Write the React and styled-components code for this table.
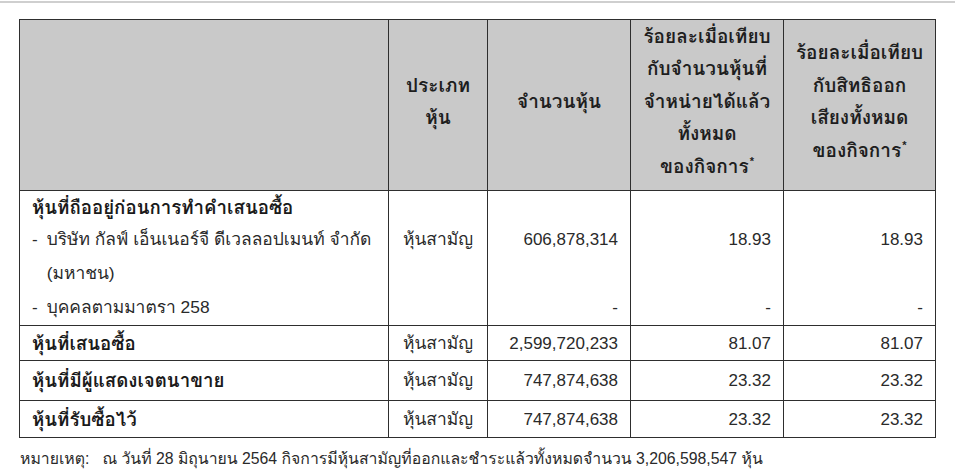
import React from "react";
import styled, { createGlobalStyle } from "styled-components";

const GlobalStyle = createGlobalStyle`
  body {
    margin: 0;
    background: #fff;
    font-family: "Liberation Sans", "Loma", "Garuda", "Noto Sans Thai Looped", "Noto Sans Thai", "Noto Sans", sans-serif;
    color: #2a2a2a;
  }
`;

const Page = styled.div`
  width: 955px;
  height: 475px;
  box-sizing: border-box;
  border-top: 2px solid #cfcfcf;
  margin-top: 1px;
  padding: 16px 0 0 19px;
`;

const Table = styled.table`
  width: 916px;
  border-collapse: collapse;
  table-layout: fixed;
  border: 1px solid #2e2e2e;
`;

const HeadCell = styled.th`
  height: 164px;
  padding: 0 4px 6px;
  background: #c9c9c9;
  border: 1px solid #2e2e2e;
  font-size: 19px;
  font-weight: 700;
  line-height: 32.5px;
  color: #1e1e1e;
  text-align: center;
  vertical-align: middle;
  white-space: nowrap;
`;

const Mark = styled.sup`
  font-size: 11px;
  line-height: 0;
  vertical-align: 8px;
  margin-left: 1px;
`;

const Cell = styled.td`
  height: ${(p) => p.$h || 34}px;
  padding: 0 12px;
  border: 1px solid #2e2e2e;
  font-size: ${(p) => (p.$num ? 17 : 17.4)}px;
  line-height: 33px;
  text-align: ${(p) => p.$align || "left"};
  vertical-align: ${(p) => (p.$top ? "top" : "middle")};
  white-space: nowrap;
`;

const GroupLines = styled.div`
  display: grid;
  grid-template-rows: 32px 34px 34px 33px;
`;

const Label = styled.div`
  font-size: 18.7px;
  font-weight: 700;
  color: #1a1a1a;
`;

const Item = styled.div`
  display: flex;
  gap: 9px;
`;

const Dash = styled.span`
  font-size: 17px;
  visibility: ${(p) => (p.$hidden ? "hidden" : "visible")};
`;

const Footnote = styled.div`
  margin-top: 9px;
  margin-left: 1px;
  font-size: 15.8px;
  line-height: 24px;
  display: flex;
  gap: 13px;
`;

const rows = [
  { label: "หุ้นที่เสนอซื้อ", shares: "2,599,720,233", pctSold: "81.07", pctVote: "81.07", h: 34 },
  { label: "หุ้นที่มีผู้แสดงเจตนาขาย", shares: "747,874,638", pctSold: "23.32", pctVote: "23.32", h: 39 },
  { label: "หุ้นที่รับซื้อไว้", shares: "747,874,638", pctSold: "23.32", pctVote: "23.32", h: 36 },
];

export default function App() {
  return (
    <>
      <GlobalStyle />
      <Page>
        <Table>
          <colgroup>
            <col style={{ width: 369 }} />
            <col style={{ width: 99 }} />
            <col style={{ width: 143 }} />
            <col style={{ width: 153 }} />
            <col style={{ width: 152 }} />
          </colgroup>
          <thead>
            <tr>
              <HeadCell />
              <HeadCell>
                ประเภท
                <br />
                หุ้น
              </HeadCell>
              <HeadCell>จำนวนหุ้น</HeadCell>
              <HeadCell>
                ร้อยละเมื่อเทียบ
                <br />
                กับจำนวนหุ้นที่
                <br />
                จำหน่ายได้แล้ว
                <br />
                ทั้งหมด
                <br />
                ของกิจการ<Mark>*</Mark>
              </HeadCell>
              <HeadCell>
                ร้อยละเมื่อเทียบ
                <br />
                กับสิทธิออก
                <br />
                เสียงทั้งหมด
                <br />
                ของกิจการ<Mark>*</Mark>
              </HeadCell>
            </tr>
          </thead>
          <tbody>
            <tr>
              <Cell $top $h={134}>
                <GroupLines>
                  <Label>หุ้นที่ถืออยู่ก่อนการทำคำเสนอซื้อ</Label>
                  <Item>
                    <Dash>-</Dash>
                    <span>บริษัท กัลฟ์ เอ็นเนอร์จี ดีเวลลอปเมนท์ จำกัด</span>
                  </Item>
                  <Item>
                    <Dash $hidden>-</Dash>
                    <span>(มหาชน)</span>
                  </Item>
                  <Item>
                    <Dash>-</Dash>
                    <span>บุคคลตามมาตรา 258</span>
                  </Item>
                </GroupLines>
              </Cell>
              <Cell $top $align="center">
                <GroupLines>
                  <span />
                  <span>หุ้นสามัญ</span>
                </GroupLines>
              </Cell>
              <Cell $top $num $align="right">
                <GroupLines>
                  <span />
                  <span>606,878,314</span>
                  <span />
                  <span>-</span>
                </GroupLines>
              </Cell>
              <Cell $top $num $align="right">
                <GroupLines>
                  <span />
                  <span>18.93</span>
                  <span />
                  <span>-</span>
                </GroupLines>
              </Cell>
              <Cell $top $num $align="right">
                <GroupLines>
                  <span />
                  <span>18.93</span>
                  <span />
                  <span>-</span>
                </GroupLines>
              </Cell>
            </tr>
            {rows.map((r) => (
              <tr key={r.label}>
                <Cell $h={r.h}>
                  <Label>{r.label}</Label>
                </Cell>
                <Cell $h={r.h} $align="center">
                  หุ้นสามัญ
                </Cell>
                <Cell $h={r.h} $num $align="right">
                  {r.shares}
                </Cell>
                <Cell $h={r.h} $num $align="right">
                  {r.pctSold}
                </Cell>
                <Cell $h={r.h} $num $align="right">
                  {r.pctVote}
                </Cell>
              </tr>
            ))}
          </tbody>
        </Table>
        <Footnote>
          <span>หมายเหตุ:</span>
          <span>
            ณ วันที่ 28 มิถุนายน 2564 กิจการมีหุ้นสามัญที่ออกและชำระแล้วทั้งหมดจำนวน 3,206,598,547 หุ้น
          </span>
        </Footnote>
      </Page>
    </>
  );
}
